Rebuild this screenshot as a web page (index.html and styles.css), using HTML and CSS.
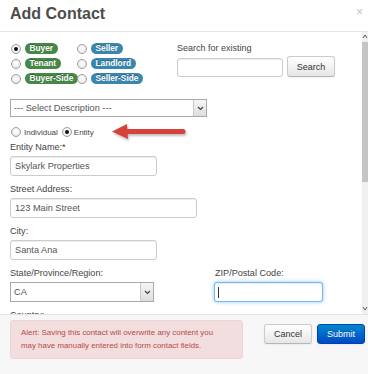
FILE: index.html
```html
<!DOCTYPE html>
<html>
<head>
<meta charset="utf-8">
<link rel="stylesheet" href="styles.css">
</head>
<body>
<div class="modal">
  <div class="header">
    <h1 class="title">Add Contact</h1>
    <span class="close">×</span>
  </div>
  <div class="body">
    <div class="content">
      <div class="top">
        <div class="roles">
          <div class="role"><span class="radio checked"></span><span class="pill green">Buyer</span></div>
          <div class="role"><span class="radio"></span><span class="pill blue">Seller</span></div>
          <div class="role"><span class="radio"></span><span class="pill green">Tenant</span></div>
          <div class="role"><span class="radio"></span><span class="pill blue">Landlord</span></div>
          <div class="role"><span class="radio"></span><span class="pill green">Buyer-Side</span></div>
          <div class="role"><span class="radio"></span><span class="pill blue">Seller-Side</span></div>
        </div>
        <div class="search">
          <div class="search-label">Search for existing</div>
          <div class="search-row">
            <div class="field search-input"></div>
            <button class="btn btn-search">Search</button>
          </div>
        </div>
      </div>
      <div class="select select-desc">
        <span class="select-text">--- Select Description ---</span>
        <span class="select-arrow"><svg width="7" height="5" viewBox="0 0 7 5"><path d="M1 1 L3.5 3.5 L6 1" fill="none" stroke="#444" stroke-width="1.2"/></svg></span>
      </div>
      <div class="type-row">
        <span class="radio"></span><span class="type-text">Individual</span>
        <span class="radio checked type-radio2"></span><span class="type-text type-text2">Entity</span>
      </div>
      <div class="label first">Entity Name:*</div>
      <div class="field w147">Skylark Properties</div>
      <div class="label">Street Address:</div>
      <div class="field w187">123 Main Street</div>
      <div class="label">City:</div>
      <div class="field w147">Santa Ana</div>
      <div class="split">
        <div class="col-left">
          <div class="label">State/Province/Region:</div>
          <div class="select select-state">
            <span class="select-text">CA</span>
            <span class="select-arrow"><svg width="7" height="5" viewBox="0 0 7 5"><path d="M1 1 L3.5 3.5 L6 1" fill="none" stroke="#444" stroke-width="1.2"/></svg></span>
          </div>
        </div>
        <div class="col-right">
          <div class="label zip-label">ZIP/Postal Code:</div>
          <div class="field zip"><span class="caret"></span></div>
        </div>
      </div>
      <div class="label">Country:</div>
    </div>
    <div class="scrollbar">
      <div class="sb-arrow"><svg width="6" height="10" viewBox="0 0 6 10"><path d="M1 6 L3 3 L5 6" fill="none" stroke="#555" stroke-width="1"/></svg></div>
      <div class="sb-thumb"></div>
      <div class="sb-track"></div>
      <div class="sb-arrow"><svg width="6" height="10" viewBox="0 0 6 10"><path d="M1 3 L3 6 L5 3" fill="none" stroke="#555" stroke-width="1"/></svg></div>
    </div>
  </div>
  <div class="footer">
    <div class="alert">Alert: Saving this contact will overwrite any content you<br>may have manually entered into form contact fields.</div>
    <div class="actions">
      <button class="btn btn-cancel">Cancel</button>
      <button class="btn btn-submit">Submit</button>
    </div>
  </div>
  <svg class="annot-arrow" width="80" height="22" viewBox="0 0 80 22">
    <line x1="16" y1="10.5" x2="74" y2="10.5" stroke="#d8413a" stroke-width="5" stroke-linecap="round"/>
    <polygon points="3,10.5 18,3 19,18" fill="#d8413a"/>
  </svg>
</div>
</body>
</html>
```

FILE: styles.css
```css
body {
  margin: 0;
  background: #fff;
  font-family: "Liberation Sans", Arial, sans-serif;
}

.modal {
  position: relative;
  width: 368px;
  height: 374px;
  display: flex;
  flex-direction: column;
  overflow: hidden;
  background: #fff;
}

.header {
  height: 31px;
  flex: none;
  border-bottom: 1px solid #e5e5e5;
  display: flex;
  justify-content: space-between;
  padding: 0 5px 0 10px;
}

.title {
  margin: 0;
  font-size: 16px;
  line-height: 28px;
  font-weight: bold;
  color: #4d4d4d;
}

.close {
  font-size: 12px;
  line-height: 24px;
  color: #c4c4c4;
}

.body {
  height: 282px;
  flex: none;
  display: flex;
  overflow: hidden;
}

.content {
  flex: 1;
  padding: 9px 0 0 10px;
  overflow: hidden;
  color: #444;
}

.top {
  display: flex;
}

.roles {
  width: 166px;
  margin-left: 1px;
  display: grid;
  grid-template-columns: 66px auto;
  grid-auto-rows: 15px;
  align-items: center;
}

.role {
  display: flex;
  align-items: center;
  gap: 4px;
  white-space: nowrap;
}

.radio {
  width: 10px;
  height: 10px;
  flex: none;
  box-sizing: border-box;
  border: 1px solid #9c9c9c;
  border-radius: 50%;
  background: radial-gradient(circle at 50% 40%, #fff, #e4e4e4);
  position: relative;
}

.radio.checked::after {
  content: "";
  position: absolute;
  left: 2px;
  top: 2px;
  width: 4px;
  height: 4px;
  border-radius: 50%;
  background: #111;
}

.pill {
  flex: none;
  white-space: nowrap;
  font-size: 8.3px;
  font-weight: bold;
  line-height: 11px;
  color: #fff;
  padding: 0 4.5px;
  border-radius: 6px;
  text-shadow: 0 -1px 0 rgba(0, 0, 0, 0.3);
}

.green { background: #468847; }
.blue { background: #3a87ad; }

.search {
  padding-top: 1px;
}

.search-label {
  font-size: 9px;
  line-height: 12px;
  color: #444;
}

.search-row {
  display: flex;
  align-items: flex-end;
  margin-top: 2px;
}

.field {
  box-sizing: border-box;
  height: 20px;
  border: 1px solid #ccc;
  border-radius: 3px;
  box-shadow: inset 0 1px 1px rgba(0, 0, 0, 0.075);
  padding-left: 4px;
  font-size: 9.2px;
  line-height: 18px;
  color: #555;
  background: #fff;
}

.search-input {
  width: 106px;
  height: 19px;
}

.btn {
  box-sizing: border-box;
  border: 1px solid #cbcbcb;
  border-bottom-color: #b5b5b5;
  border-radius: 3px;
  background: linear-gradient(#ffffff, #e6e6e6);
  font-family: "Liberation Sans", Arial, sans-serif;
  font-size: 9px;
  color: #333;
  padding: 0;
  display: flex;
  align-items: center;
  justify-content: center;
  box-shadow: 0 1px 2px rgba(0, 0, 0, 0.05);
}

.btn-search {
  width: 48px;
  height: 21px;
  margin-left: 4px;
}

.select {
  box-sizing: border-box;
  border: 1px solid #a9a9a9;
  background: #fff;
  display: flex;
}

.select-desc {
  width: 197px;
  height: 18px;
  margin-top: 13px;
}

.select-state {
  width: 144px;
  height: 20px;
}

.select-text {
  flex: 1;
  padding-left: 3px;
  font-size: 9.2px;
  line-height: 16px;
  color: #555;
}

.select-state .select-text {
  line-height: 18px;
}

.select-arrow {
  width: 12px;
  border-left: 1px solid #cacaca;
  background: linear-gradient(#f6f6f6, #dedede);
  display: flex;
  align-items: center;
  justify-content: center;
}

.type-row {
  display: flex;
  align-items: center;
  height: 12px;
  margin-top: 9px;
  margin-left: 1px;
  font-size: 8px;
  color: #444;
}

.type-text {
  margin-left: 3px;
}

.type-radio2 {
  margin-left: 4px;
}

.type-text2 {
  margin-left: 2px;
}

.label {
  font-size: 9.1px;
  line-height: 12px;
  color: #444;
  margin: 7px 0 3px;
}

.label.first {
  margin-top: 3px;
}

.w147 { width: 147px; }
.w187 { width: 187px; }

.split {
  display: flex;
}

.col-left {
  width: 204px;
}

.zip-label {
  padding-left: 1px;
}

.zip {
  width: 109px;
  border-color: rgba(82, 168, 236, 0.8);
  box-shadow: inset 0 1px 1px rgba(0, 0, 0, 0.075), 0 0 4px rgba(82, 168, 236, 0.6);
  display: flex;
  align-items: center;
  padding-left: 3px;
}

.caret {
  width: 1px;
  height: 11px;
  background: #333;
}

.scrollbar {
  width: 6px;
  flex: none;
  display: flex;
  flex-direction: column;
  background: #f0f0f0;
}

.sb-arrow {
  height: 10px;
  display: flex;
  justify-content: center;
}

.sb-thumb {
  height: 140px;
  background: #c4c4c4;
}

.sb-track {
  flex: 1;
  background: #f0f0f0;
}

.footer {
  flex: 1;
  border-top: 1px solid #e3e3e3;
  background: #f7f7f7;
  display: flex;
  padding: 5px 3px 0 10px;
}

.alert {
  box-sizing: border-box;
  width: 233px;
  height: 39px;
  background: #f2dede;
  border: 1px solid #eed3d7;
  border-radius: 3px;
  color: #b94a48;
  font-size: 7.9px;
  line-height: 12.5px;
  padding: 6px 10px;
  white-space: nowrap;
}

.actions {
  margin-left: auto;
  align-self: flex-start;
  margin-top: 4px;
  display: flex;
  gap: 5px;
}

.btn-cancel {
  width: 48px;
  height: 20px;
}

.btn-submit {
  width: 48px;
  height: 20px;
  color: #fff;
  background: linear-gradient(#0088cc, #0048c8);
  border: 1px solid #0044aa;
  text-shadow: 0 -1px 0 rgba(0, 0, 0, 0.25);
}

.annot-arrow {
  position: absolute;
  left: 109px;
  top: 121px;
  filter: drop-shadow(1px 2px 1px rgba(0, 0, 0, 0.25));
}
```
